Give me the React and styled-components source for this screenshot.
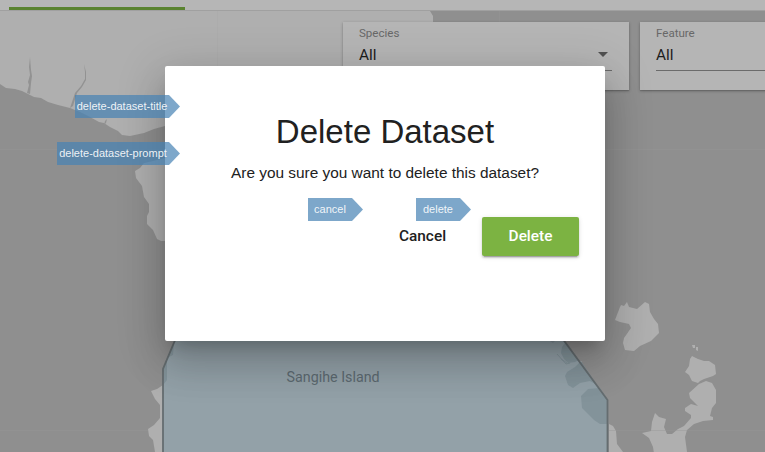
import React from 'react';
import styled, { createGlobalStyle } from 'styled-components';

const GlobalStyle = createGlobalStyle`
  * { box-sizing: border-box; }
  body { margin: 0; overflow: hidden; font-family: Roboto, sans-serif; }
`;

const Page = styled.div`
  position: relative;
  display: flex;
  flex-direction: column;
  width: 100%;
  height: 100vh;
  overflow: hidden;
  background: #8f8f8f;
`;

const Header = styled.header`
  flex: none;
  display: flex;
  align-items: flex-end;
  height: 11px;
  padding-left: 9px;
  background: #b6b6b6;
  border-bottom: 1px solid #a0a0a0;
`;

const ActiveTab = styled.div`
  width: 176px;
  height: 3px;
  background: #5a8330;
`;

const MapArea = styled.main`
  position: relative;
  flex: 1;
  overflow: hidden;
`;

const MapDrawing = styled.svg`
  position: absolute;
  left: 0;
  top: 0;
`;

const PlaceName = styled.span`
  position: absolute;
  left: 286.5px;
  top: 357px;
  font-size: 14.3px;
  line-height: 18px;
  color: #5c6970;
`;

const Filters = styled.div`
  position: relative;
  display: flex;
  gap: 11px;
  padding: 11px 0 0 343px;
`;

const FilterCard = styled.section`
  flex: none;
  width: 286px;
  height: 68px;
  padding: 5px 17px 0 16px;
  background: #b5b5b5;
  box-shadow: 0 1px 3px rgba(0, 0, 0, 0.25), 0 1px 1px rgba(0, 0, 0, 0.12);
`;

const FilterLabel = styled.div`
  font-size: 11.55px;
  line-height: 13px;
  color: #686868;
`;

const FilterValue = styled.div`
  display: flex;
  align-items: center;
  justify-content: space-between;
  height: 31px;
  padding: 0 4px 1px 0;
  border-bottom: 1px solid #6b6b6b;
  font-size: 15.4px;
  color: #1c1c1c;
`;

const Caret = styled.span`
  border: 5.5px solid transparent;
  border-top: 5px solid #505050;
  border-bottom: 0;
  margin-top: -1px;
`;

const Overlay = styled.div`
  position: absolute;
  inset: 0;
  padding: 66px 160px 0 165px;
`;

const Dialog = styled.div`
  position: relative;
  display: flex;
  flex-direction: column;
  height: 275px;
  padding: 46px 26px 0;
  background: #fff;
  border-radius: 2px;
  box-shadow: 0 11px 15px -7px rgba(0, 0, 0, 0.2),
    0 24px 38px 3px rgba(0, 0, 0, 0.14), 0 9px 46px 8px rgba(0, 0, 0, 0.12);
`;

const Title = styled.h1`
  margin: 0;
  font: 400 33px/40px 'Liberation Sans', sans-serif;
  text-align: center;
  color: #212121;
`;

const Prompt = styled.p`
  margin: 11px 0 0;
  font: 400 15.4px/20px 'Liberation Sans', sans-serif;
  text-align: center;
  color: #212121;
`;

const Actions = styled.div`
  display: flex;
  justify-content: flex-end;
  gap: 10px;
  margin-top: 34px;
`;

const Button = styled.button`
  height: 39px;
  width: ${(p) => (p.$primary ? '97px' : '99px')};
  padding: 0;
  border: 0;
  border-radius: 2px;
  font: 500 15.4px/39px Roboto, sans-serif;
  color: ${(p) => (p.$primary ? '#fff' : '#212121')};
  background: ${(p) => (p.$primary ? '#7cb342' : 'transparent')};
  box-shadow: ${(p) =>
    p.$primary
      ? '0 3px 1px -2px rgba(0,0,0,.2), 0 2px 2px rgba(0,0,0,.14), 0 1px 5px rgba(0,0,0,.12)'
      : 'none'};
`;

const Tag = styled.span`
  position: absolute;
  left: ${(p) => p.$x}px;
  top: ${(p) => p.$y}px;
  width: ${(p) => p.$w}px;
  height: 23px;
  padding-right: 11px;
  background: rgba(70, 130, 180, 0.7);
  clip-path: polygon(0 0, calc(100% - 11px) 0, 100% 50%, calc(100% - 11px) 100%, 0 100%);
  font: 11px/22px 'Liberation Sans', sans-serif;
  text-align: center;
  white-space: nowrap;
  color: rgba(255, 255, 255, 0.9);
`;

const TagText = styled.span`
  display: inline-block;
  margin: 0 -4px;
`;

const TAGS = [
  { text: 'delete-dataset-title', x: 75, y: 95, w: 105 },
  { text: 'delete-dataset-prompt', x: 57, y: 142, w: 123 },
  { text: 'cancel', x: 308, y: 198, w: 55 },
  { text: 'delete', x: 416, y: 198, w: 55 },
];

const REGION = 'M163 460V369L176 338H562L607.5 400V460Z';

const ISLANDS = [
  'M0 11H430L433 16V70H165V126L154 129L144 133L130 136L122 135L118 131L110 127L104 123L99 122L90 117L80 112L70 108L58 105L48 102L41 98L34 97L28 94L22 91L15 89L6 88L0 84Z',
  'M165 158L153 161L144 163L140 168L135 171L136 178L142 186L144 197L149 204V212L147 216V224L153 230L157 239L161 241H165Z',
  'M163 385L157 389L151 391L155 399L160 405V418L154 425L148 429L149 436L153 440L155 452V460H163Z',
  'M615 320L620 307L621 305L624 306L627 302L629 307L637 309L645 302L649 304L650 312L654 319L658 324L659 333L651 341L640 346L634 351L625 350L623 343L624 338L631 328L629 324L620 322Z',
  'M692 356L698 359L704 361L709 361L715 365L716 374L713 376L704 379L700 381L698 383L692 381L689 375L685 372L689 366L690 359Z',
  'M699 384L706 381L712 383L716 390V403L712 408L710 416L713 417V420L703 421L694 424L687 430L685 437L687 452V460H655L653 447L649 438L642 433L651 431L652 422L655 413L659 417L666 419L664 427L667 434H672L678 429L684 426L691 418V415L685 411V408L691 404L698 406L690 398L689 393Z',
  'M692 345L695 345L695 348L693 348Z M696 347L698 347L698 351L696 350Z',
  'M609 424L613 426L616 431L617 444L623 452L627 460H609Z',
  'M579 361L582 361L581 363Z',
];

const STREAMS = [
  'M30 57L29 67L30 75L28 82L29 85L27 93L30 94L31 83L32 76L31 70Z',
  'M84 64L85 72V79L81 86L75 93L70 108L73 106L77 93L82 87L86 80V72Z',
  'M107 119L106 123L104 125L105 121Z',
];

const UNDER_REGION = [
  'M565 343L562 347L561 353L564 359L568 363L575 362L579 360Z',
  'M581 361L575 367L567 372L565 376L568 385L573 388L580 383L590 381L597 385Z',
  'M600 388L588 389L581 396L582 408L587 413L594 420L600 424L608 424V400Z',
  'M163 369L174 342L173 355L167 358L167 380L163 385Z',
  'M550 341H555L553 343Z',
];

function Map() {
  return (
    <MapDrawing width="765" height="441" viewBox="0 11 765 441">
      {ISLANDS.map((d) => (
        <path key={d} d={d} fill="#afafaf" />
      ))}
      {STREAMS.map((d) => (
        <path key={d} d={d} fill="#929292" />
      ))}
      <path
        d="M499.5 11V22M0 149.5H165M605 149.5H765M0 430.5H148M609 430.5H765"
        fill="none"
        stroke="#979797"
        strokeWidth=".4"
      />
      <path d="M217.5 11V66" stroke="#aaa" strokeWidth=".4" />
      <path d={REGION} fill="#93a1a8" />
      {UNDER_REGION.map((d) => (
        <path key={d} d={d} fill="#83939a" />
      ))}
      <path d="M557 354L566 364L570 363M561 359L567 363" fill="none" stroke="#83939a" />
      <path d={REGION} fill="none" stroke="#656d70" strokeWidth="1.8" />
    </MapDrawing>
  );
}

function Filter({ label }) {
  return (
    <FilterCard>
      <FilterLabel>{label}</FilterLabel>
      <FilterValue>
        All
        <Caret />
      </FilterValue>
    </FilterCard>
  );
}

export default function App() {
  return (
    <Page>
      <GlobalStyle />
      <Header>
        <ActiveTab />
      </Header>
      <MapArea>
        <Map />
        <PlaceName>Sangihe Island</PlaceName>
        <Filters>
          <Filter label="Species" />
          <Filter label="Feature" />
        </Filters>
      </MapArea>
      <Overlay>
        <Dialog>
          <Title>Delete Dataset</Title>
          <Prompt>Are you sure you want to delete this dataset?</Prompt>
          <Actions>
            <Button>Cancel</Button>
            <Button $primary>Delete</Button>
          </Actions>
        </Dialog>
      </Overlay>
      {TAGS.map((t) => (
        <Tag key={t.text} $x={t.x} $y={t.y} $w={t.w}>
          <TagText>{t.text}</TagText>
        </Tag>
      ))}
    </Page>
  );
}
